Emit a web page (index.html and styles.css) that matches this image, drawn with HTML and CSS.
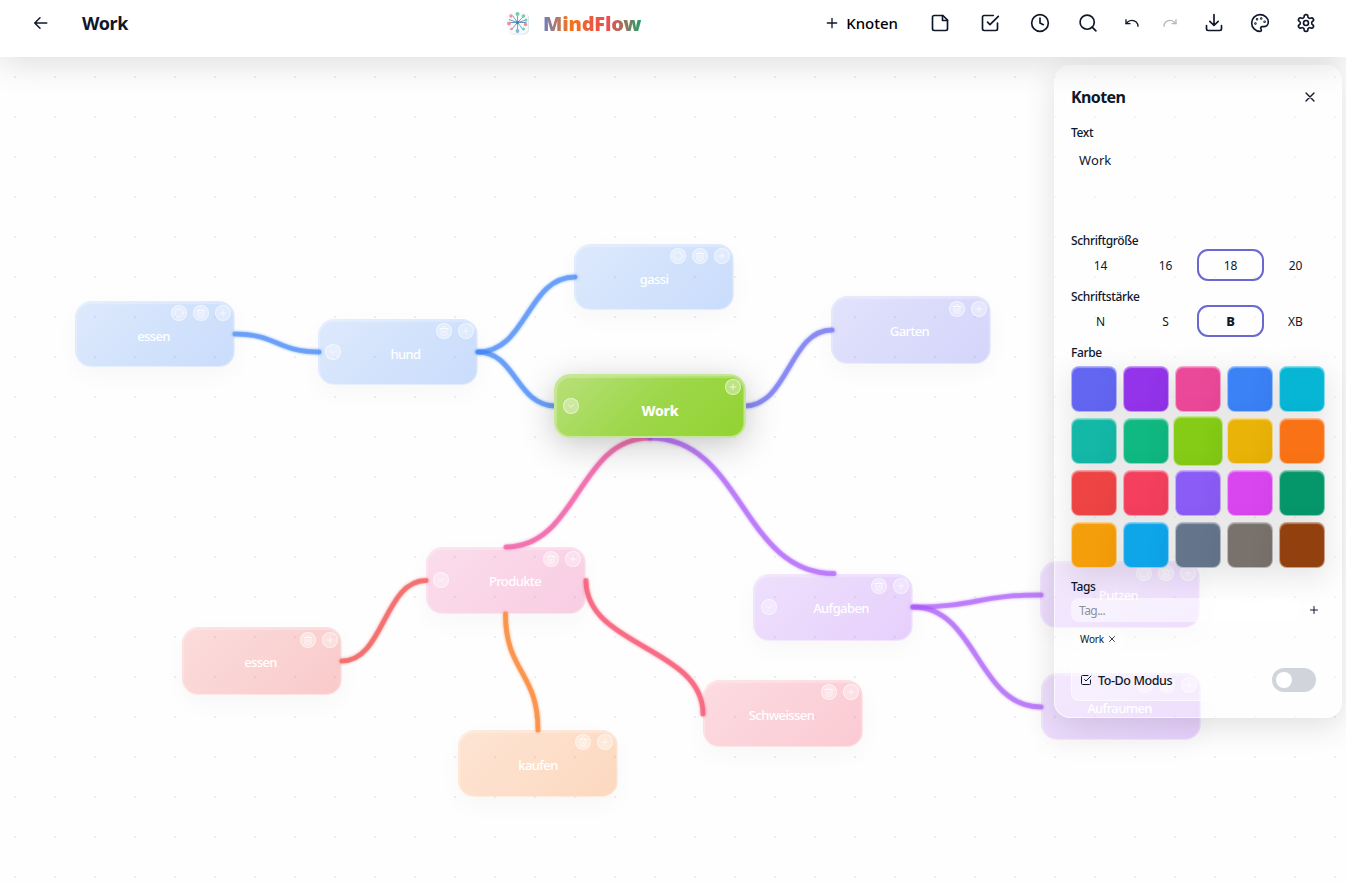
FILE: index.html
```html
<!DOCTYPE html>
<html lang="de">
<head>
<meta charset="utf-8">
<title>MindFlow</title>
<link rel="stylesheet" href="styles.css">
</head>
<body>
<svg class="defs" width="0" height="0">
  <symbol id="plus" viewBox="0 0 24 24"><path d="M5 12h14M12 5v14"/></symbol>
  <symbol id="x" viewBox="0 0 24 24"><path d="M18 6 6 18M6 6l12 12"/></symbol>
  <symbol id="chev" viewBox="0 0 24 24"><path d="m4 8 8 8 8-8"/></symbol>
  <symbol id="ring" viewBox="0 0 24 24"><circle cx="12" cy="12" r="10"/></symbol>
  <symbol id="trash" viewBox="0 0 24 24"><path d="M2 6h20M19 6v14c0 1-1 2-2 2H7c-1 0-2-1-2-2V6M8 6V4c0-1 1-2 2-2h4c1 0 2 1 2 2v2M10 11v6M14 11v6"/></symbol>
  <symbol id="check" viewBox="0 0 24 24"><path d="m9 11 3 3L22 4"/><path d="M21 12v7a2 2 0 0 1-2 2H5a2 2 0 0 1-2-2V5a2 2 0 0 1 2-2h11"/></symbol>
</svg>

<header class="topbar">
  <div class="left">
    <svg class="ic" width="18" height="18" viewBox="0 0 24 24"><path d="m12 19-7-7 7-7M21 12H5"/></svg>
    <h1 class="title">Work</h1>
  </div>
  <div class="brand">
    <svg class="logo" width="26" height="26" viewBox="0 0 26 26">
      <rect x="3" y="3" width="21" height="21.500" rx="5" fill="#dfe6ea"/>
      <rect x="2" y="2" width="21" height="21.500" rx="5" fill="#f8fbfc"/>
      <g stroke-width="1" fill="none">
        <path stroke="#62b2cd" d="M12.500 12.500V3M12.500 12.500 7.500 5.500M12.500 12.500l6-6M12.500 12.500v9M12.500 12.500l5.500 7"/>
        <path stroke="#7393bb" d="M12.500 12.500 4 9.500M12.500 12.500H4M12.500 12.500l9-2.500M12.500 12.500h9M12.500 12.500l-6 7"/>
      </g>
      <g fill="#7cc8b4"><circle cx="12.500" cy="4" r="2"/><circle cx="18.500" cy="6" r="1.800"/><circle cx="21" cy="10" r="1.500"/><circle cx="18.500" cy="19" r="1.500"/></g>
      <g fill="#ee8f9b"><circle cx="6" cy="6" r="1.700"/><circle cx="4" cy="13.500" r="1.900"/><circle cx="20.500" cy="14.500" r="1.800"/><circle cx="6.500" cy="19" r="1.300"/></g>
      <circle cx="12.500" cy="21" r="1.900" fill="#7fb6e6"/><circle cx="12.500" cy="12.500" r="1.700" fill="#3f86b5"/>
    </svg>
    <span class="name">MindFlow</span>
  </div>
  <div class="tools">
    <svg class="ic add" width="16" height="16"><use href="#plus"/></svg>
    <span class="addtext">Knoten</span>
    <svg class="ic g32" width="20" height="20" viewBox="0 0 24 24"><path d="M15.500 3H5a2 2 0 0 0-2 2v14a2 2 0 0 0 2 2h14a2 2 0 0 0 2-2V8.500L15.500 3Z"/><path d="M15 3v6h6"/></svg>
    <svg class="ic g30" width="20" height="20"><use href="#check"/></svg>
    <svg class="ic g30" width="20" height="20" viewBox="0 0 24 24"><circle cx="12" cy="12" r="10"/><path d="M12 6v6l4 2"/></svg>
    <svg class="ic g28" width="20" height="20" viewBox="0 0 24 24"><circle cx="11" cy="11" r="8.500"/><path d="m21.500 21.500-4.500-4.500"/></svg>
    <svg class="ic g26" width="16" height="16" viewBox="0 0 24 24"><path d="M3 7v6h6"/><path d="M21 17a9 9 0 0 0-9-9 9 9 0 0 0-6 2.300L3 13"/></svg>
    <svg class="ic g22 off" width="16" height="16" viewBox="0 0 24 24"><path d="M21 7v6h-6"/><path d="M3 17a9 9 0 0 1 9-9 9 9 0 0 1 6 2.300l3 2.700"/></svg>
    <svg class="ic g26" width="20" height="20" viewBox="0 0 24 24"><path d="M21 15v4a2 2 0 0 1-2 2H5a2 2 0 0 1-2-2v-4M7 10l5 5 5-5M12 15V2"/></svg>
    <svg class="ic g26" width="20" height="20" viewBox="0 0 24 24"><circle cx="13.500" cy="6.500" r=".5"/><circle cx="17.500" cy="10.500" r=".5"/><circle cx="8.500" cy="7.500" r=".5"/><circle cx="6.500" cy="12.500" r=".5"/><path d="M12 2C6.500 2 2 6.500 2 12s4.500 10 10 10c.926 0 1.648-.746 1.648-1.688 0-.437-.18-.835-.437-1.125-.29-.289-.438-.652-.438-1.125a1.640 1.640 0 0 1 1.668-1.668h1.996c3.051 0 5.555-2.503 5.555-5.554C21.965 6.012 17.461 2 12 2z"/></svg>
    <svg class="ic g26" width="20" height="20" viewBox="0 0 24 24"><path d="M12.220 2h-.44a2 2 0 0 0-2 2v.18a2 2 0 0 1-1 1.730l-.43.25a2 2 0 0 1-2 0l-.15-.08a2 2 0 0 0-2.730.73l-.22.38a2 2 0 0 0 .73 2.730l.15.1a2 2 0 0 1 1 1.720v.51a2 2 0 0 1-1 1.740l-.15.09a2 2 0 0 0-.73 2.730l.22.38a2 2 0 0 0 2.730.73l.15-.08a2 2 0 0 1 2 0l.43.25a2 2 0 0 1 1 1.730V20a2 2 0 0 0 2 2h.44a2 2 0 0 0 2-2v-.18a2 2 0 0 1 1-1.730l.43-.25a2 2 0 0 1 2 0l.15.08a2 2 0 0 0 2.730-.73l.22-.39a2 2 0 0 0-.73-2.730l-.15-.08a2 2 0 0 1-1-1.740v-.5a2 2 0 0 1 1-1.740l.15-.09a2 2 0 0 0 .73-2.730l-.22-.38a2 2 0 0 0-2.730-.73l-.15.08a2 2 0 0 1-2 0l-.43-.25a2 2 0 0 1-1-1.730V4a2 2 0 0 0-2-2z"/><circle cx="12" cy="12" r="3"/></svg>
  </div>
</header>

<main class="canvas">
  <div class="node blue" style="left:75px;top:244px;height:66px"><div class="acts"><i><svg><use href="#ring"/></svg></i><i><svg><use href="#trash"/></svg></i><i><svg><use href="#plus"/></svg></i></div><span class="s-2">essen</span></div>
  <div class="node blue" style="left:318px;top:262px;height:66px"><i class="fold"><svg><use href="#chev"/></svg></i><div class="acts"><i><svg><use href="#trash"/></svg></i><i><svg><use href="#plus"/></svg></i></div><span class="s7">hund</span></div>
  <div class="node blue" style="left:574px;top:187px;height:66px"><div class="acts"><i><svg><use href="#ring"/></svg></i><i><svg><use href="#trash"/></svg></i><i><svg><use href="#plus"/></svg></i></div><span>gassi</span></div>
  <div class="node indigo" style="left:831px;top:239px;height:68px"><div class="acts low"><i><svg><use href="#trash"/></svg></i><i><svg><use href="#plus"/></svg></i></div><span class="s-2">Garten</span></div>
  <div class="node pink" style="left:426px;top:490px;height:67px"><i class="fold"><svg><use href="#chev"/></svg></i><div class="acts"><i><svg><use href="#trash"/></svg></i><i><svg><use href="#plus"/></svg></i></div><span class="s9">Produkte</span></div>
  <div class="node purple" style="left:753px;top:517px;height:67px"><i class="fold"><svg><use href="#chev"/></svg></i><div class="acts"><i><svg><use href="#trash"/></svg></i><i><svg><use href="#plus"/></svg></i></div><span class="s8">Aufgaben</span></div>
  <div class="node purple" style="left:1040px;top:504px;height:67px"><div class="acts"><i><svg><use href="#ring"/></svg></i><i><svg><use href="#trash"/></svg></i><i><svg><use href="#plus"/></svg></i></div><span class="s-2">Putzen</span></div>
  <div class="node purple lower" style="left:1041px;top:616px;height:67px"><div class="acts"><i><svg><use href="#ring"/></svg></i><i><svg><use href="#trash"/></svg></i><i><svg><use href="#plus"/></svg></i></div><span class="s-2">Aufraumen</span></div>
  <div class="node red" style="left:182px;top:570px;height:68px"><div class="acts low"><i><svg><use href="#trash"/></svg></i><i><svg><use href="#plus"/></svg></i></div><span class="s-2">essen</span></div>
  <div class="node rose" style="left:703px;top:623px;height:67px"><div class="acts"><i><svg><use href="#trash"/></svg></i><i><svg><use href="#plus"/></svg></i></div><span class="s-2">Schweissen</span></div>
  <div class="node orange" style="left:458px;top:673px;height:67px"><div class="acts"><i><svg><use href="#trash"/></svg></i><i><svg><use href="#plus"/></svg></i></div><span>kaufen</span></div>

  <svg class="edges" width="1346" height="827" viewBox="0 57 1346 827">
    <g color="#3b82f6"><path d="M235 334C277 334 277 352 319 352"/><path d="M478 352C527 352 527 277 575 277"/><path d="M478 352C516 352 516 406 556 406"/></g>
    <g color="#6366f1"><path d="M744 406C789 406 789 330 832 330"/></g>
    <g color="#ec4899"><path d="M650 438C578 438 578 547 506 547"/></g>
    <g color="#a855f7"><path d="M650 438C742 438 742 573.500 834 573.500"/><path d="M913 607C977 607 977 595 1041 595"/><path d="M913 607C977 607 977 707 1041 707"/></g>
    <g color="#ef4444"><path d="M426 580.500C384 580.500 384 661 342 661"/></g>
    <g color="#f97316"><path d="M505.500 614C505.500 672 538 672 538 730"/></g>
    <g color="#f43f5e"><path d="M586 580.500C586 647 703 647 703 714"/></g>
  </svg>

  <div class="node root" style="left:554px;top:317px"><i class="fold"><svg><use href="#chev"/></svg></i><div class="acts"><i><svg><use href="#plus"/></svg></i></div><span>Work</span></div>

  <aside class="panel">
    <div class="phead"><h2>Knoten</h2><button class="close"><svg class="ic" width="16" height="16"><use href="#x"/></svg></button></div>
    <label class="lb first">Text</label>
    <div class="area">Work</div>
    <label class="lb">Schriftgröße</label>
    <div class="opts"><button>14</button><button>16</button><button class="sel">18</button><button>20</button></div>
    <label class="lb next">Schriftstärke</label>
    <div class="opts"><button>N</button><button>S</button><button class="sel bold">B</button><button>XB</button></div>
    <label class="lb next">Farbe</label>
    <div class="swatches">
      <b class="c1"></b><b class="c2"></b><b class="c3"></b><b class="c4"></b><b class="c5"></b>
      <b class="c6"></b><b class="c7"></b><b class="c8"></b><b class="c9"></b><b class="c10"></b>
      <b class="c11"></b><b class="c12"></b><b class="c13"></b><b class="c14"></b><b class="c15"></b>
      <b class="c16"></b><b class="c17"></b><b class="c18"></b><b class="c19"></b><b class="c20"></b>
    </div>
    <label class="lb tags">Tags</label>
    <div class="tagrow"><div class="taginput">Tag...</div><svg class="ic" width="12" height="12"><use href="#plus"/></svg></div>
    <div class="chip">Work<svg class="ic" width="10" height="10"><use href="#x"/></svg></div>
    <div class="todo"><svg class="ic" width="12" height="12"><use href="#check"/></svg><span>To-Do Modus</span><div class="toggle"><div class="knob"></div></div></div>
  </aside>
</main>
</body>
</html>
```
FILE: styles.css
```css
* { box-sizing: border-box; }
body { margin: 0; width: 1346px; height: 884px; overflow: hidden; background: #fefefe; color: #0f172a; font-family: "Noto Sans", sans-serif; display: flex; flex-direction: column; }
svg { display: block; flex: none; }
.defs { position: absolute; }
.ic { fill: none; stroke: #0f172a; stroke-width: 2; stroke-linecap: round; stroke-linejoin: round; }
h1, h2 { margin: 0; }
button { font: inherit; color: inherit; border: 0; background: none; padding: 0; }

.topbar { position: relative; z-index: 2; height: 57px; flex: none; background: #fff; box-shadow: 0 8px 32px rgba(0,0,0,.12); display: grid; grid-template-columns: 505px 1fr auto; padding: 0 30px 11px 0; }
.left, .brand, .tools { display: flex; align-items: center; }
.left { padding-left: 31px; gap: 33px; }
.title { font-size: 18px; font-weight: 700; letter-spacing: -.4px; }
.brand { gap: 12px; }
.name { font-size: 20px; font-weight: 900; letter-spacing: -.2px; background: linear-gradient(90deg, #6b7fc0 0%, #f97316 28%, #ea5a3c 50%, #ef4f4f 65%, #a0705c 82%, #22a06b 100%); -webkit-background-clip: text; background-clip: text; color: transparent; }
.add { margin-right: 6px; }
.addtext { font-size: 15px; font-weight: 500; color: #000; letter-spacing: 0; }
.g32 { margin-left: 32px; } .g30 { margin-left: 30px; } .g28 { margin-left: 28px; } .g26 { margin-left: 26px; } .g22 { margin-left: 22px; }
.off { opacity: .3; }

.canvas { position: relative; flex: 1; overflow: hidden; background-image: radial-gradient(circle at 15px 20px, #eeeef0 1.2px, transparent 1.3px); background-size: 40px 40px; }
.edges { position: absolute; left: 0; top: 0; }
.edges g { filter: drop-shadow(0 0 1.5px currentColor); }
.edges path { fill: none; stroke: currentColor; stroke-width: 5; stroke-linecap: round; stroke-opacity: .54; }

.node { position: absolute; width: 160px; border-radius: 16px; border: 1px solid rgba(255,255,255,.35); display: flex; align-items: center; justify-content: center; color: #fff; font-size: 13px; font-weight: 500; letter-spacing: -.6px; padding-top: 2px; box-shadow: 0 8px 24px rgba(0,0,0,.03), inset 0 1px 1px 1px rgba(255,255,255,.25); }
.blue { padding-top: 4px; background: linear-gradient(135deg, rgba(59,130,246,.17), rgba(59,130,246,.27)); }
.indigo { background: linear-gradient(135deg, rgba(99,102,241,.18), rgba(99,102,241,.27)); }
.pink { padding-top: 0; background: linear-gradient(135deg, rgba(236,72,153,.18), rgba(236,72,153,.27)); }
.purple { padding-top: 0; background: linear-gradient(135deg, rgba(168,85,247,.18), rgba(168,85,247,.27)); }
.purple.lower { padding-top: 2px; }
.red { background: linear-gradient(135deg, rgba(239,68,68,.18), rgba(239,68,68,.28)); }
.rose { background: linear-gradient(135deg, rgba(244,63,94,.18), rgba(244,63,94,.27)); }
.orange { background: linear-gradient(135deg, rgba(249,115,22,.18), rgba(249,115,22,.27)); }
.root { width: 192px; height: 64px; border: 2px solid #c6e795; font-size: 14px; font-weight: 800; letter-spacing: -.2px; padding: 8px 0 0 20px; background: linear-gradient(135deg, #b8e079, #9dd74a 50%, #92d331); box-shadow: 0 8px 36px rgba(0,0,0,.2), 0 2px 16px rgba(0,0,0,.03), inset 0 1px 1px 1px rgba(255,255,255,.25); }
.s-2 { margin-right: 3px; } .s7 { margin-left: 15px; } .s8 { margin-left: 16px; } .s9 { margin-left: 18px; }
.acts { position: absolute; right: 3px; top: 3px; display: flex; gap: 6px; }
.pink .acts, .orange .acts { right: 4px; }
.low { top: 4px; }
.node i { width: 16px; height: 16px; border-radius: 50%; border: 1px solid rgba(255,255,255,.5); background: rgba(255,255,255,.36); display: flex; align-items: center; justify-content: center; }
.node i svg { width: 10px; height: 10px; fill: none; stroke: rgba(255,255,255,.8); stroke-width: 2; stroke-linecap: round; stroke-linejoin: round; }
.node .fold svg { width: 8px; height: 8px; stroke-width: 2.500; }
.fold { position: absolute; left: 6px; top: 24px; }
.purple .fold { left: 7px; }
.root .fold { top: 22px; left: 7px; }
.root .acts { top: 3px; right: 3px; }

.panel { position: absolute; left: 1054px; top: 8px; width: 288px; height: 653px; border-radius: 16px; border: 1px solid rgba(255,255,255,.6); background: rgba(255,255,255,.3); padding: 16px; display: flex; flex-direction: column; box-shadow: 0 8px 32px rgba(0,0,0,.12), inset 0 1px 1px rgba(255,255,255,.5); }
.phead { display: flex; justify-content: space-between; align-items: center; height: 30px; }
.phead h2 { font-size: 16px; font-weight: 700; letter-spacing: -.6px; }
.close { width: 30px; height: 30px; display: flex; align-items: center; justify-content: center; }
.lb { display: block; height: 16px; line-height: 16px; font-size: 12px; font-weight: 500; letter-spacing: -.35px; flex: none; }
.first { margin-top: 13px; }
.area { height: 82px; margin: 3px 0 7px; padding: 6px 8px; font-size: 13px; line-height: 20px; letter-spacing: .1px; }
.opts { display: grid; grid-template-columns: repeat(4, 59px); gap: 6px; height: 28px; margin-top: 2px; flex: none; font-size: 12px; letter-spacing: -.3px; }
.opts .sel { margin: -2px -4px; height: 32px; border: 2px solid #6969d0; border-radius: 11px; }
.bold { font-weight: 800; font-size: 13px; }
.next { margin-top: 10px; }
.swatches { display: grid; grid-template-columns: repeat(5, 46px); grid-auto-rows: 46px; gap: 6px; margin-top: 5px; flex: none; }
.swatches b { border-radius: 8px; border: 1px solid rgba(255,255,255,.5); box-shadow: 0 8px 32px rgba(0,0,0,.12), inset 0 1px 1px rgba(255,255,255,.35); }
.c1 { background: #6366f1; } .c2 { background: #9333ea; } .c3 { background: #ec4899; } .c4 { background: #3b82f6; } .c5 { background: #06b6d4; }
.c6 { background: #14b8a6; } .c7 { background: #10b981; } .c8 { background: #84cc16; } .c9 { background: #eab308; } .c10 { background: #f97316; }
.c11 { background: #ef4444; } .c12 { background: #f43f5e; } .c13 { background: #8b5cf6; } .c14 { background: #d946ef; } .c15 { background: #059669; }
.c16 { background: #f59e0b; } .c17 { background: #0ea5e9; } .c18 { background: #64748b; } .c19 { background: #78716c; } .c20 { background: #92400e; }
.swatches .c8 { margin: -2px; }
.tags { margin-top: 11px; }
.tagrow { display: flex; justify-content: space-between; align-items: center; height: 24px; margin-top: 3px; padding-right: 5px; flex: none; }
.taginput { width: 228px; height: 24px; border-radius: 8px; background: rgba(255,255,255,.5); padding-left: 8px; line-height: 25px; font-size: 12px; letter-spacing: -.55px; color: #8c90a0; }
.chip { display: flex; align-items: center; gap: 3px; width: 54px; height: 20px; margin-top: 7px; padding-left: 9px; font-size: 10px; letter-spacing: -.2px; border-radius: 10px; background: rgba(255,255,255,.4); flex: none; }
.todo { display: flex; align-items: center; height: 42px; margin-top: 10px; padding: 0 8px; border: 1px solid rgba(255,255,255,.6); border-radius: 8px; background: rgba(255,255,255,.4); flex: none; }
.todo span { margin-left: 6px; font-size: 12.500px; font-weight: 500; letter-spacing: -.4px; }
.toggle { margin-left: auto; width: 44px; height: 24px; border-radius: 12px; background: #d1d5db; padding: 4px; }
.knob { width: 16px; height: 16px; border-radius: 50%; background: #fff; }
```
